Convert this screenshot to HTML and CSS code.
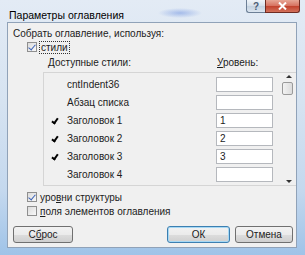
FILE: index.html
```html
<!DOCTYPE html>
<html lang="ru">
<head>
    <meta charset="UTF-8">
    <title>Параметры оглавления</title>
    <link rel="stylesheet" href="styles.css">
</head>
<body>

<div class="window">
    <!-- Title bar -->
    <div class="titlebar">
        <span class="title">Параметры оглавления</span>
        <div class="caption-btns">
            <span class="cap-btn help">?</span>
            <span class="cap-btn close">
                <svg width="9" height="8" viewBox="0 0 9 8"><path d="M1 0.5 L8 7.5 M8 0.5 L1 7.5" stroke="#fff" stroke-width="2"/></svg>
            </span>
        </div>
    </div>

    <!-- Client area -->
    <div class="client">
        <div class="group-label">Собрать оглавление, используя:</div>
        <div class="check-row styles-row">
            <span class="checkbox checked"></span>
            <span class="focus">стили</span>
        </div>

        <div class="list-head">
            <span class="head-name">Доступные стили:</span>
            <span class="head-level"><u>У</u>ровень:</span>
        </div>

        <div class="list">
            <div class="rows">
                <div class="row"><span class="mark"></span><span class="name">cntIndent36</span><span class="level"></span></div>
                <div class="row"><span class="mark"></span><span class="name">Абзац списка</span><span class="level"></span></div>
                <div class="row"><span class="mark on"></span><span class="name">Заголовок 1</span><span class="level">1</span></div>
                <div class="row"><span class="mark on"></span><span class="name">Заголовок 2</span><span class="level">2</span></div>
                <div class="row"><span class="mark on"></span><span class="name">Заголовок 3</span><span class="level">3</span></div>
                <div class="row"><span class="mark"></span><span class="name">Заголовок 4</span><span class="level"></span></div>
            </div>
            <div class="scroll">
                <span class="arrow up"></span>
                <span class="thumb"></span>
                <span class="arrow down"></span>
            </div>
        </div>

        <div class="check-row outline-row">
            <span class="checkbox checked"></span>
            <span>уро<u>в</u>ни структуры</span>
        </div>
        <div class="check-row">
            <span class="checkbox"></span>
            <span><u>п</u>оля элементов оглавления</span>
        </div>

        <div class="buttons">
            <button class="btn reset">С<u>б</u>рос</button>
            <button class="btn ok">ОК</button>
            <button class="btn cancel">Отмена</button>
        </div>
    </div>
</div>

</body>
</html>
```

FILE: styles.css
```css
/* General */
body {
    margin: 0;
    padding: 0;
    overflow: hidden;
    font-family: "Liberation Sans", Arial, sans-serif;
    font-size: 10px;
    color: #1c1c1c;
}

.window {
    width: 305px;
    height: 255px;
    box-sizing: border-box;
    padding: 0 8px 7px 7px;
    display: flex;
    flex-direction: column;
    background:
        radial-gradient(ellipse 22px 5px at 180px 13px, rgba(90, 130, 220, 0.45), transparent),
        linear-gradient(to bottom, #e3ebf5 0%, #d6e3f1 40%, #c4d8ee 75%, #9fc3e8 100%);
}

/* Title bar */
.titlebar {
    height: 22px;
    display: flex;
    align-items: flex-start;
    justify-content: space-between;
}

.title {
    margin: 8px 0 0 2px;
    font-size: 10.5px;
    line-height: 14px;
    color: #000;
}

.caption-btns {
    display: flex;
    margin-right: -3px;
}

.cap-btn {
    height: 13px;
    display: flex;
    align-items: center;
    justify-content: center;
    box-sizing: border-box;
    border: 1px solid #6c7f96;
    border-top: none;
}

.help {
    width: 19px;
    border-radius: 0 0 0 3px;
    border-right: none;
    background: linear-gradient(to bottom, #f0f4f9, #d5dfea 50%, #c3d1e0 51%, #dbe5ef);
    color: #4c5d75;
    font-size: 10px;
    font-weight: bold;
}

.close {
    width: 35px;
    border-color: #6e2b22;
    border-radius: 0 0 3px 0;
    background: linear-gradient(to bottom, #e7a796, #d6705e 50%, #c2412c 51%, #d2715b);
}

/* Client area */
.client {
    flex: 1;
    background: #f0f0f0;
    border: 1px solid #90a2b8;
    padding: 0 0 0 5px;
    display: flex;
    flex-direction: column;
}

.group-label {
    margin-top: 4px;
    line-height: 13px;
}

.check-row {
    height: 14px;
    display: flex;
    align-items: center;
    padding-left: 14px;
}

.checkbox {
    width: 10px;
    height: 10px;
    box-sizing: border-box;
    border: 1px solid #8f8f8f;
    background: linear-gradient(135deg, #dcdcdc, #f8f8f8);
    margin-right: 3px;
    position: relative;
}

.checkbox.checked::after {
    content: "";
    position: absolute;
    left: 2px;
    top: 0px;
    width: 3px;
    height: 6px;
    border: solid #3c63b7;
    border-width: 0 1.5px 1.5px 0;
    transform: rotate(40deg);
}

.focus {
    border: 1px dotted #333;
    padding: 0 1px;
    margin-left: -1px;
    line-height: 11px;
}

.list-head {
    margin-top: 2px;
    height: 14px;
    line-height: 14px;
    display: flex;
}

.head-name {
    margin-left: 35px;
    width: 169px;
}

/* Styles list */
.list {
    margin: 2px 0 0 30px;
    height: 114px;
    box-sizing: border-box;
    border: 1px solid #d5d5d5;
    border-right: none;
    display: flex;
}

.rows {
    flex: 1;
    padding-top: 2px;
}

.row {
    height: 18px;
    display: grid;
    grid-template-columns: 23px 149px 57px;
    align-items: center;
}

.mark.on::before {
    content: "";
    display: block;
    margin-left: 9px;
    width: 2px;
    height: 5px;
    border: solid #000;
    border-width: 0 2px 2px 0;
    transform: rotate(35deg);
}

.level {
    height: 15px;
    box-sizing: border-box;
    border: 1px solid #b5b8bd;
    background: #fff;
    line-height: 13px;
    padding-left: 3px;
}

.scroll {
    width: 16px;
    position: relative;
}

.arrow {
    position: absolute;
    left: 6px;
    width: 0;
    height: 0;
    border-left: 3px solid transparent;
    border-right: 3px solid transparent;
}

.arrow.up {
    top: 2px;
    border-bottom: 3px solid #333;
}

.arrow.down {
    bottom: 2px;
    border-top: 3px solid #333;
}

.thumb {
    position: absolute;
    left: 2px;
    top: 9px;
    width: 11px;
    height: 13px;
    box-sizing: border-box;
    border: 1px solid #9a9a9a;
    border-radius: 2px;
    background: linear-gradient(to right, #f2f2f2, #dcdcdc);
}

.outline-row {
    margin-top: 4px;
}

/* Buttons */
.buttons {
    margin-top: 8px;
    display: flex;
    gap: 5px;
    padding-right: 3px;
}

.btn {
    height: 17px;
    padding: 0;
    font-family: inherit;
    font-size: 10px;
    color: #1c1c1c;
    border: 1px solid #707070;
    border-radius: 3px;
    background: linear-gradient(to bottom, #f2f2f2, #ebebeb 50%, #dddddd 51%, #cfcfcf);
}

.reset {
    width: 60px;
    margin-right: auto;
}

.ok {
    width: 63px;
    border-color: #3c7fb1;
    box-shadow: inset 0 0 0 1px #a6d8f4;
}

.cancel {
    width: 58px;
}
```
